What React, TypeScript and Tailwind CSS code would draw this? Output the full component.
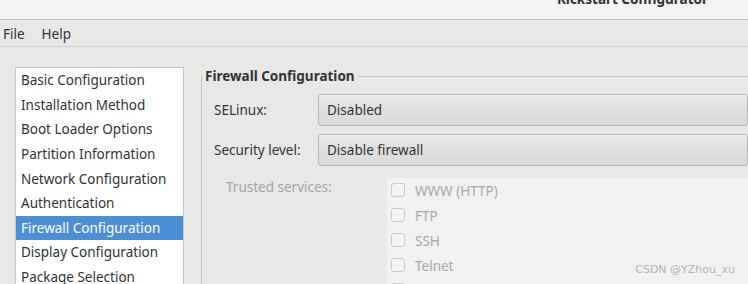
const sections = [
  "Basic Configuration",
  "Installation Method",
  "Boot Loader Options",
  "Partition Information",
  "Network Configuration",
  "Authentication",
  "Firewall Configuration",
  "Display Configuration",
  "Package Selection",
];

const services = ["WWW (HTTP)", "FTP", "SSH", "Telnet", "Mail (SMTP)"];

function Combo({ value }: { value: string }) {
  return (
    <div className="h-[32px] w-[520px] flex items-center px-[8px] rounded-[3px] border border-[#b6b6b3] bg-gradient-to-b from-[#e8e8e7] to-[#d8d8d6] shadow-[inset_0_1px_0_#f4f4f4] text-[#2e3436]">
      {value}
    </div>
  );
}

export default function App() {
  return (
    <div
      className="relative w-[748px] h-[284px] overflow-hidden bg-[#e8e8e7] text-[13.5px] text-[#2e3436]"
      style={{ fontFamily: '"Noto Sans", "DejaVu Sans", sans-serif' }}
    >
      {/* Title bar */}
      <div className="h-[20px] bg-[#f3f3f3] border-b border-[#bcbcbc] flex justify-end pr-[40px] overflow-hidden">
        <span className="font-bold leading-[18px] -mt-[10px] text-[#2e3436]">
          Kickstart Configurator
        </span>
      </div>

      {/* Menu bar */}
      <div className="h-[27px] border-b border-[#d3d3d1] flex items-center gap-[17px] pl-[3px] pt-[2px]">
        <span>File</span>
        <span>Help</span>
      </div>

      {/* Content */}
      <div className="flex pl-[15px] pt-[20px]">
        <div className="w-[169px] h-[240px] bg-white border border-[#c6c6c4] flex flex-col shrink-0">
          {sections.map((s) => (
            <div
              key={s}
              className={
                "h-[24.6px] shrink-0 flex items-center pl-[5px] " +
                (s === "Firewall Configuration" ? "bg-[#4a90d9] text-white" : "")
              }
            >
              {s}
            </div>
          ))}
        </div>

        <fieldset className="ml-[17px] flex-1 border-t border-l border-[#c4c4c1] min-w-0">
          <legend className="font-bold leading-[18px] ml-[1px] pl-[2px] pr-[3px]">
            Firewall Configuration
          </legend>
          <div className="pl-[12px] pt-[9px]">
            <div className="flex flex-col gap-[8px]">
              <div className="flex items-center">
                <span className="w-[104px] shrink-0">SELinux:</span>
                <Combo value="Disabled" />
              </div>
              <div className="flex items-center">
                <span className="w-[104px] shrink-0">Security level:</span>
                <Combo value="Disable firewall" />
              </div>
            </div>
            <div className="flex mt-[12px]">
              <span className="w-[173px] shrink-0 pl-[12px] pt-[0px] leading-[18px] text-[#a5a5a3]">
                Trusted services:
              </span>
              <div className="flex-1 bg-[#f1f1f1] pl-[4px] pt-[5px] h-[120px] flex flex-col">
                {services.map((s) => (
                  <div key={s} className="h-[25px] shrink-0 flex items-start gap-[10px]">
                    <span className="w-[14px] h-[14px] rounded-[3px] border border-[#c8c8c6] bg-[#f3f3f3] shrink-0" />
                    <span className="leading-[16px] text-[#a8a8a6]">{s}</span>
                  </div>
                ))}
              </div>
            </div>
          </div>
        </fieldset>
      </div>

      <div
        className="absolute right-[13px] bottom-[6px] text-[11px] text-[#b4b4b4]"
        style={{ fontFamily: '"DejaVu Sans", sans-serif' }}
      >
        CSDN @YZhou_xu
      </div>
    </div>
  );
}
